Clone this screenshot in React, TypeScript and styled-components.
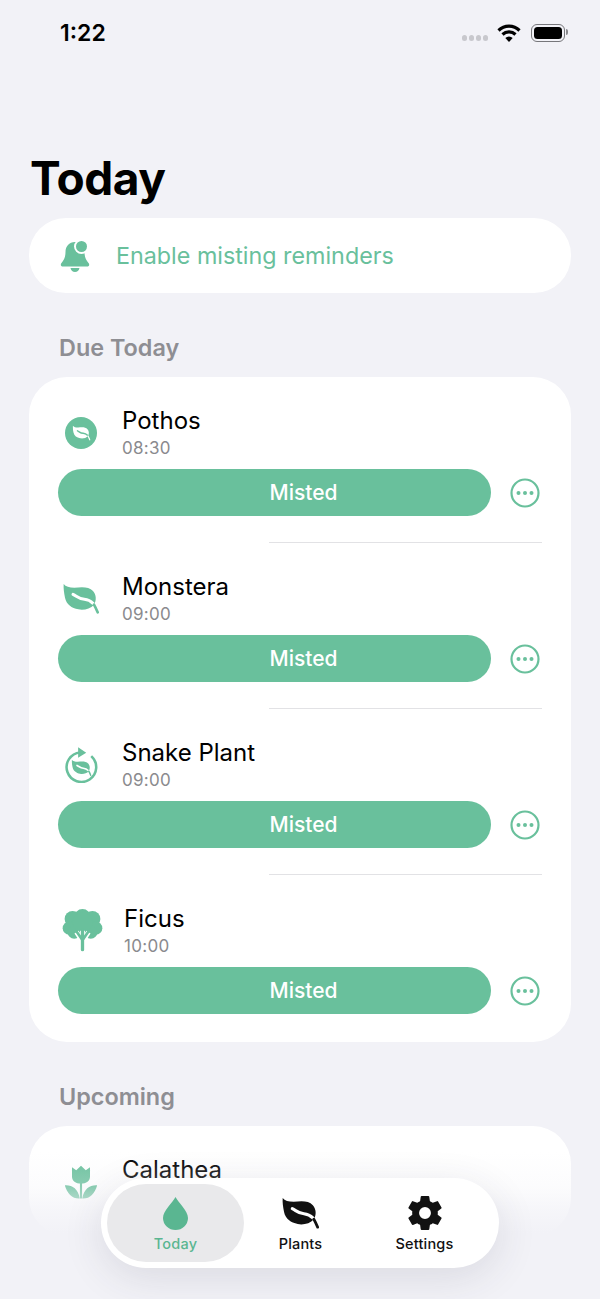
import React from 'react'
import styled, { createGlobalStyle } from 'styled-components'
import { IoSettingsSharp } from 'react-icons/io5'

const GREEN = '#69c09c'
const DEEP_GREEN = '#5ab691'

const GlobalStyle = createGlobalStyle`
  html, body {
    margin: 0;
    background: #f2f2f7;
  }
  * {
    box-sizing: border-box;
  }
`

const Screen = styled.div`
  position: relative;
  width: 600px;
  height: 1299px;
  overflow: hidden;
  background: #f2f2f7;
  font-family: Inter, "Liberation Sans", sans-serif;
  color: #000;
`

const StatusBar = styled.div`
  display: flex;
  align-items: center;
  height: 66px;
  padding: 0 35px 0 60px;
`

const Clock = styled.div`
  font-size: 23px;
  font-weight: 600;
  flex: 1;
`

const SignalDots = styled.div`
  display: flex;
  gap: 1.5px;
  margin: 10px 9px 0 0;
  & span {
    width: 5.5px;
    height: 5.5px;
    border-radius: 50%;
    background: #c8c8cd;
  }
`

const Battery = styled.div`
  position: relative;
  width: 34px;
  height: 18px;
  margin-left: 10px;
  padding: 2px;
  border: 1.5px solid #77777b;
  border-radius: 6px;
  &::before {
    content: '';
    display: block;
    height: 100%;
    border-radius: 3.5px;
    background: #000;
  }
  &::after {
    content: '';
    position: absolute;
    right: -4px;
    top: 4px;
    width: 2px;
    height: 6px;
    border-radius: 0 2px 2px 0;
    background: #8a8a8e;
  }
`

const Content = styled.main`
  padding: 0 29px;
`

const Title = styled.h1`
  margin: 84px 0 0 1px;
  height: 68px;
  font-size: 46px;
  line-height: 56px;
  font-weight: 700;
  letter-spacing: -0.5px;
`

const Banner = styled.div`
  display: flex;
  align-items: center;
  gap: 25px;
  height: 75px;
  padding-left: 30px;
  border-radius: 37px;
  background: #fff;
  color: ${GREEN};
  font-size: 23.3px;
`

const SectionTitle = styled.h2`
  margin: 0;
  padding: 0 0 15px 30px;
  height: 84px;
  display: flex;
  align-items: flex-end;
  font-size: 23.4px;
  font-weight: 600;
  color: #8e8e93;
`

const Card = styled.section`
  border-radius: 38px;
  background: #fff;
  overflow: hidden;
`

const PlantRow = styled.div`
  padding: 29px 29px 26px;
  &:last-child {
    padding-bottom: 28px;
  }
`

const RowHead = styled.div`
  display: flex;
  align-items: center;
`

const IconSlot = styled.div<{ $wide?: boolean }>`
  display: flex;
  align-items: center;
  justify-content: center;
  width: ${(p) => (p.$wide ? 48 : 46)}px;
  margin-right: 18px;
  flex-shrink: 0;
`

const PlantName = styled.div`
  font-size: 24px;
  line-height: 30px;
`

const PlantTime = styled.div`
  margin-top: 1px;
  font-size: 17px;
  line-height: 22px;
  letter-spacing: 0.3px;
  color: #8a8a8e;
`

const ActionRow = styled.div`
  display: flex;
  align-items: center;
  margin-top: 10px;
`

const MistedButton = styled.button`
  flex: none;
  width: 433px;
  height: 47px;
  padding: 0 0 0 58px;
  border: 0;
  border-radius: 24px;
  background: ${GREEN};
  color: #fff;
  font-family: inherit;
  font-size: 21px;
  font-weight: 500;
`

const MoreSlot = styled.div`
  display: flex;
  margin-left: 19px;
`

const Divider = styled.div`
  height: 1px;
  margin: 0 29px 0 240px;
  background: #e2e2e5;
`

const BottomFade = styled.div`
  position: absolute;
  left: 0;
  right: 0;
  bottom: 0;
  height: 173px;
  background: linear-gradient(
    to bottom,
    rgba(242, 242, 247, 0) 15%,
    rgba(242, 242, 247, 0.25) 35%,
    rgba(242, 242, 247, 0.75) 50%,
    #f2f2f7 62%
  );
`

const TabBar = styled.nav`
  position: absolute;
  left: 101px;
  top: 1178px;
  width: 398px;
  height: 90px;
  padding: 6px;
  display: flex;
  border-radius: 45px;
  background: #fff;
  box-shadow: 0 10px 40px rgba(50, 50, 70, 0.12);
`

const Tab = styled.div<{ $active?: boolean; $width: number }>`
  width: ${(p) => p.$width}px;
  display: flex;
  flex-direction: column;
  align-items: center;
  justify-content: flex-end;
  padding-bottom: 10px;
  gap: 4px;
  border-radius: 39px;
  background: ${(p) => (p.$active ? '#e9e9eb' : 'transparent')};
  color: ${(p) => (p.$active ? DEEP_GREEN : '#111')};
  font-size: 14.5px;
  font-weight: 450;
  letter-spacing: 0.2px;
`

const TabIcon = styled.div`
  display: flex;
  align-items: center;
  justify-content: center;
  height: 36px;
`

// leaf.fill style shape, drawn over a 108x94 box
const LeafShape = ({ color, vein }: { color: string; vein: string }) => (
  <>
    <path
      fill={color}
      d="M38 25C44 33 55 36 70 36C92 34 114 32 126 46C136 57 137 74 129 87C118 100 98 104 82 101C62 97 46 86 42 66C39 50 37 38 38 25Z"
    />
    <path
      fill="none"
      stroke={vein}
      strokeWidth="9"
      strokeLinecap="round"
      d="M66 56C78 62 84 70 100 71C110 72 118 75 126 83"
    />
    <path
      fill="none"
      stroke={color}
      strokeWidth="8"
      strokeLinecap="round"
      d="M129 87C133 94 137 103 140 110"
    />
  </>
)

const Leaf = ({ width, color }: { width: number; color: string }) => (
  <svg width={width} height={(width * 94) / 108} viewBox="36 22 108 94">
    <LeafShape color={color} vein="#fff" />
  </svg>
)

const BellIcon = () => (
  <svg width="32" height="34" viewBox="0 0 32 34">
    <path
      fill={GREEN}
      d="M16 3c-6 0-9.500 4.500-9.500 10 0 5-1.500 8-4 11-1.300 1.500-.8 3.500 1.500 3.500h24c2.300 0 2.800-2 1.500-3.500-2.500-3-4-6-4-11 0-5.500-3.500-10-9.500-10zM11.500 29h9c-.5 2.500-2.300 4-4.500 4s-4-1.500-4.500-4z"
    />
    <circle cx="22.500" cy="7.500" r="7.500" fill="#fff" />
    <circle cx="22.500" cy="7.500" r="5.500" fill={GREEN} />
  </svg>
)

const BadgeLeaf = () => (
  <svg width="34" height="34" viewBox="0 0 34 34">
    <circle cx="17" cy="17" r="16" fill={GREEN} />
    <svg x="8.500" y="9" width="18" height="16" viewBox="36 22 108 94">
      <LeafShape color="#fff" vein={GREEN} />
    </svg>
  </svg>
)

const CycleLeaf = () => (
  <svg width="37" height="37" viewBox="25 13 110 110" fill="none">
    <path stroke={GREEN} strokeWidth="7.500" d="M76 32A44 44 0 1 0 109 43" />
    <path fill={GREEN} d="M70 17L94 33L70 48Z" />
    <svg x="50" y="52" width="60" height="52" viewBox="36 22 108 94">
      <LeafShape color={GREEN} vein="#fff" />
    </svg>
  </svg>
)

const TreeIcon = () => (
  <svg width="43" height="43" viewBox="15 10 130 130">
    <g fill={GREEN}>
      <circle cx="80" cy="35" r="25" />
      <circle cx="50" cy="40" r="24" />
      <circle cx="110" cy="40" r="24" />
      <circle cx="40" cy="68" r="20" />
      <circle cx="120" cy="68" r="20" />
      <circle cx="55" cy="80" r="20" />
      <circle cx="105" cy="80" r="20" />
      <circle cx="80" cy="50" r="30" />
    </g>
    <path stroke="#fff" strokeWidth="15" fill="none" d="M62 80L80 108L98 80M80 76V108" />
    <path stroke={GREEN} strokeWidth="8" strokeLinecap="round" fill="none" d="M62 78L80 104L98 78" />
    <path stroke={GREEN} strokeWidth="10" strokeLinecap="round" fill="none" d="M80 74V133" />
  </svg>
)

const TulipIcon = () => (
  <svg width="34" height="34" viewBox="0 0 32 32" fill={GREEN}>
    <path d="M7.500 2l4 3L16 .800 20.500 5l4-3v8.500c0 4.500-3.500 7-8.500 7s-8.500-2.500-8.500-7z" />
    <path d="M15 15h2v16.500h-2z" />
    <path d="M.800 19c6.500-.5 12.500 3 14 12.500C8 32 3 27 .800 19z" />
    <path d="M31.200 19c-6.500-.5-12.500 3-14 12.500C24 32 29 27 31.200 19z" />
  </svg>
)

const MoreIcon = () => (
  <svg width="30" height="30" viewBox="0 0 30 30">
    <circle cx="15" cy="15" r="13.500" fill="none" stroke={GREEN} strokeWidth="2.200" />
    <circle cx="8.500" cy="15" r="2" fill={GREEN} />
    <circle cx="15" cy="15" r="2" fill={GREEN} />
    <circle cx="21.500" cy="15" r="2" fill={GREEN} />
  </svg>
)

const WifiIcon = () => (
  <svg width="24" height="18" viewBox="0 0 24 18" fill="none" stroke="#000" strokeWidth="3.200">
    <path d="M1.500 6.500a15 15 0 0 1 21 0" />
    <path d="M5.500 10.500a9.500 9.500 0 0 1 13 0" />
    <path d="M12 18l-3.700-4a5.300 5.300 0 0 1 7.400 0z" fill="#000" stroke="none" />
  </svg>
)

const DropIcon = () => (
  <svg width="25" height="33" viewBox="0 0 25 33" fill={DEEP_GREEN}>
    <path d="M12.500 0C9.500 6 0 13.500 0 21a12.500 12 0 0 0 25 0C25 13.500 15.500 6 12.500 0z" />
  </svg>
)

const plants = [
  { name: 'Pothos', time: '08:30', icon: <BadgeLeaf /> },
  { name: 'Monstera', time: '09:00', icon: <Leaf width={36} color={GREEN} /> },
  { name: 'Snake Plant', time: '09:00', icon: <CycleLeaf /> },
  { name: 'Ficus', time: '10:00', icon: <TreeIcon />, wide: true },
]

const App = () => {
  return (
    <Screen>
      <GlobalStyle />
      <StatusBar>
        <Clock>1:22</Clock>
        <SignalDots>
          <span />
          <span />
          <span />
          <span />
        </SignalDots>
        <WifiIcon />
        <Battery />
      </StatusBar>
      <Content>
        <Title>Today</Title>
        <Banner>
          <BellIcon />
          Enable misting reminders
        </Banner>
        <SectionTitle>Due Today</SectionTitle>
        <Card>
          {plants.map((plant, i) => (
            <React.Fragment key={plant.name}>
              <PlantRow>
                <RowHead>
                  <IconSlot $wide={plant.wide}>{plant.icon}</IconSlot>
                  <div>
                    <PlantName>{plant.name}</PlantName>
                    <PlantTime>{plant.time}</PlantTime>
                  </div>
                </RowHead>
                <ActionRow>
                  <MistedButton>Misted</MistedButton>
                  <MoreSlot>
                    <MoreIcon />
                  </MoreSlot>
                </ActionRow>
              </PlantRow>
              {i < plants.length - 1 && <Divider />}
            </React.Fragment>
          ))}
        </Card>
        <SectionTitle>Upcoming</SectionTitle>
        <Card>
          <PlantRow>
            <RowHead>
              <IconSlot>
                <TulipIcon />
              </IconSlot>
              <div>
                <PlantName>Calathea</PlantName>
                <PlantTime>10:30</PlantTime>
              </div>
            </RowHead>
          </PlantRow>
        </Card>
      </Content>
      <BottomFade />
      <TabBar>
        <Tab $active $width={137}>
          <TabIcon>
            <DropIcon />
          </TabIcon>
          Today
        </Tab>
        <Tab $width={113}>
          <TabIcon>
            <Leaf width={37} color="#111" />
          </TabIcon>
          Plants
        </Tab>
        <Tab $width={135}>
          <TabIcon>
            <IoSettingsSharp size={38} color="#111" />
          </TabIcon>
          Settings
        </Tab>
      </TabBar>
    </Screen>
  )
}

export default App
